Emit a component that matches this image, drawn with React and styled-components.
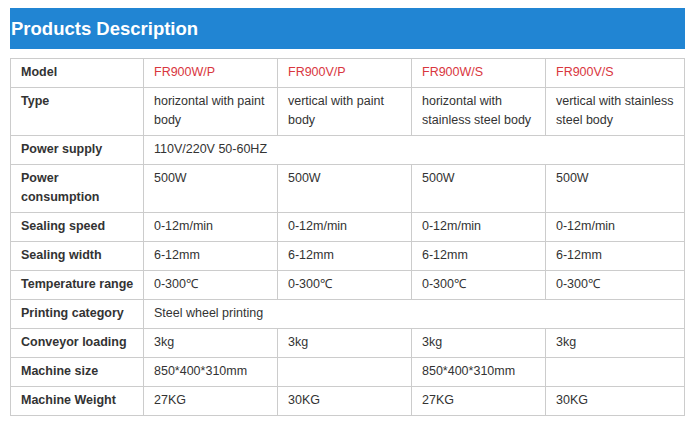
import React from "react";
import styled, {createGlobalStyle} from "styled-components";

const GlobalStyle = createGlobalStyle`
  body {
    margin: 0;
    background: #ffffff;
    font-family: "Liberation Sans", Arial, sans-serif;
  }
`

const Wrapper = styled.div`
  padding: 8px 9px 0 10px;
  width: 675px;
`

const TitleBar = styled.div`
  background-color: #2185d3;
  height: 41px;
  display: flex;
  align-items: center;
  padding-left: 1px;
`

const Title = styled.h2`
  margin: 0;
  color: #ffffff;
  font-size: 18.5px;
  font-weight: bold;
  font-family: "Liberation Sans", Arial, sans-serif;
`

const Table = styled.table`
  margin-top: 9px;
  width: 675px;
  border-collapse: collapse;
  table-layout: fixed;
  font-size: 12.5px;
  line-height: 19px;
  color: #333333;
`

const Cell = styled.td`
  border: 1px solid #cccccc;
  padding: 4px ${props => props.$label ? "6px" : "10px"} 5px 10px;
  vertical-align: top;
  font-weight: ${props => props.$label ? "bold" : "normal"};
  color: ${props => props.$model ? "#d9363e" : "#333333"};
`

const columns = [133, 134, 134, 134];

const rows = [
    {label: "Model", values: ["FR900W/P", "FR900V/P", "FR900W/S", "FR900V/S"], model: true},
    {label: "Type", values: ["horizontal with paint body", "vertical with paint body", "horizontal with stainless steel body", "vertical with stainless steel body"]},
    {label: "Power supply", values: ["110V/220V 50-60HZ"], span: 4},
    {label: "Power consumption", values: ["500W", "500W", "500W", "500W"]},
    {label: "Sealing speed", values: ["0-12m/min", "0-12m/min", "0-12m/min", "0-12m/min"]},
    {label: "Sealing width", values: ["6-12mm", "6-12mm", "6-12mm", "6-12mm"]},
    {label: "Temperature range", values: ["0-300℃", "0-300℃", "0-300℃", "0-300℃"]},
    {label: "Printing category", values: ["Steel wheel printing"], span: 4},
    {label: "Conveyor loading", values: ["3kg", "3kg", "3kg", "3kg"]},
    {label: "Machine size", values: ["850*400*310mm", "", "850*400*310mm", ""]},
    {label: "Machine Weight", values: ["27KG", "30KG", "27KG", "30KG"]},
];

const App = () => {
    return (
        <Wrapper>
            <GlobalStyle/>
            <TitleBar>
                <Title>Products Description</Title>
            </TitleBar>
            <Table>
                <colgroup>
                    {columns.map((w, i) => <col key={i} style={{width: w + "px"}}/>)}
                    <col/>
                </colgroup>
                <tbody>
                {rows.map((row) => (
                    <tr key={row.label}>
                        <Cell $label>{row.label}</Cell>
                        {row.values.map((v, i) => (
                            <Cell key={i} colSpan={row.span} $model={row.model}>{v}</Cell>
                        ))}
                    </tr>
                ))}
                </tbody>
            </Table>
        </Wrapper>
    )
}

export default App;
